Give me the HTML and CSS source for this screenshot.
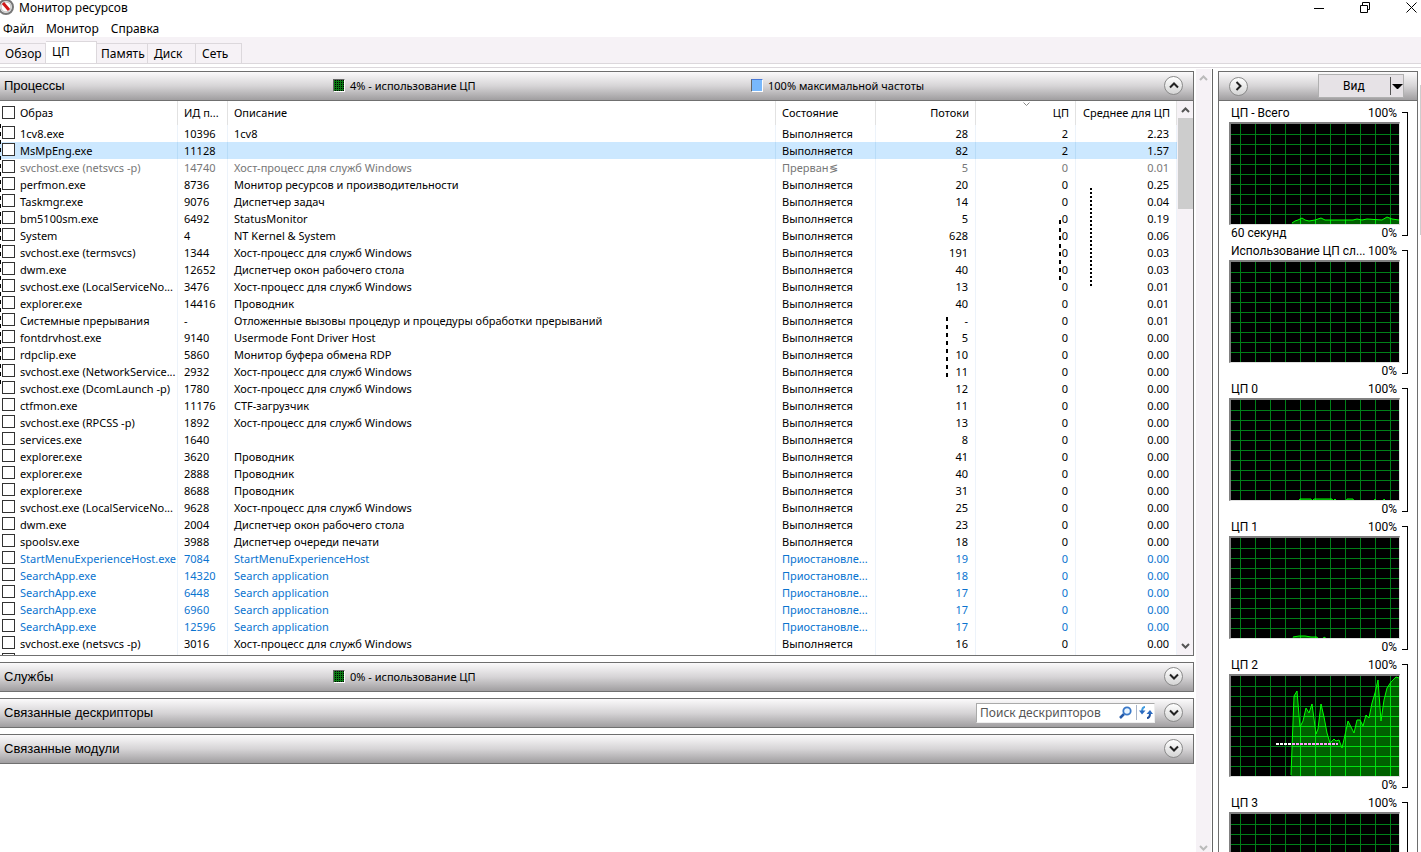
FILE: index.html
```html
<!DOCTYPE html>
<html lang="ru">
<head>
    <meta charset="UTF-8">
    <meta name="viewport" content="width=device-width, initial-scale=1.0">
    <title>Монитор ресурсов</title>
    <link rel="stylesheet" href="styles.css">
</head>
<body>
    <!-- Title Bar -->
    <header class="titlebar">
        <svg class="app-icon" width="15" height="15" viewBox="0 0 15 15">
            <circle cx="6" cy="7" r="7" fill="#f4f4f4" stroke="#777" stroke-width="2"/>
            <circle cx="6" cy="7" r="5" fill="#fff" stroke="#bbb"/>
            <path d="M3 3l6 7" stroke="#d01818" stroke-width="3"/>
        </svg>
        <h1>Монитор ресурсов</h1>
        <div class="window-buttons">
            <button aria-label="Свернуть"><svg width="11" height="11"><path d="M0 6.500h10" stroke="#000"/></svg></button>
            <button aria-label="Развернуть"><svg width="11" height="11"><path d="M.5 3.500h7v7h-7zM2.500 3.500v-3h7v7h-2" fill="none" stroke="#000"/></svg></button>
            <button aria-label="Закрыть"><svg width="11" height="11"><path d="M.5 .5l10 10M10.500 .5l-10 10" stroke="#000"/></svg></button>
        </div>
    </header>

    <nav class="menu">
        <a href="#">Файл</a>
        <a href="#">Монитор</a>
        <a href="#">Справка</a>
    </nav>

    <div class="tabs">
        <button class="tab tab-overview">Обзор</button>
        <button class="tab tab-cpu active">ЦП</button>
        <button class="tab tab-memory">Память</button>
        <button class="tab tab-disk">Диск</button>
        <button class="tab tab-net">Сеть</button>
    </div>

    <main>
        <!-- Left side: process list and collapsed sections -->
        <div class="sections">
            <section class="panel">
                <div class="panel-header">
                    <h2>Процессы</h2>
                    <span class="stat usage"><i class="swatch swatch-green"></i>4% - использование ЦП</span>
                    <span class="stat"><i class="swatch swatch-blue"></i>100% максимальной частоты</span>
                    <button class="round" aria-label="Свернуть раздел"><svg width="10" height="7"><path d="M1 5.500l4-4 4 4" /></svg></button>
                </div>
                <div class="list">
                    <table>
                        <colgroup>
                            <col class="col-image"><col class="col-pid"><col><col class="col-num"><col class="col-num"><col class="col-num"><col class="col-avg">
                        </colgroup>
                        <thead>
                            <tr>
                                <th><label><input type="checkbox">Образ</label></th>
                                <th>ИД п...</th>
                                <th>Описание</th>
                                <th>Состояние</th>
                                <th class="num">Потоки</th>
                                <th class="num sorted">ЦП<svg class="sort" width="7" height="4"><path d="M.5 .5l3 3 3-3"/></svg></th>
                                <th class="num">Среднее для ЦП</th>
                            </tr>
                        </thead>
                        <tbody id="processes"></tbody>
                    </table>
                    <div class="scrollbar">
                        <svg width="9" height="6"><path d="M1 5l3.500-3.500L8 5"/></svg>
                        <div class="thumb"></div>
                        <svg width="9" height="6"><path d="M1 1l3.500 3.500L8 1"/></svg>
                    </div>
                    <span class="trace trace-left"></span>
                    <span class="trace trace-threads"></span>
                    <span class="trace trace-cpu"></span>
                    <span class="trace trace-avg"></span>
                </div>
            </section>

            <section class="panel">
                <div class="panel-header">
                    <h2>Службы</h2>
                    <span class="stat usage"><i class="swatch swatch-green"></i>0% - использование ЦП</span>
                    <button class="round" aria-label="Развернуть раздел"><svg width="10" height="7"><path d="M1 1.500l4 4 4-4" /></svg></button>
                </div>
            </section>

            <section class="panel">
                <div class="panel-header">
                    <h2>Связанные дескрипторы</h2>
                    <form class="search">
                        <input type="text" placeholder="Поиск дескрипторов" aria-label="Поиск дескрипторов">
                        <button type="button" aria-label="Найти">
                            <svg width="13" height="13" viewBox="0 0 13 13"><path d="M1 12l4-4" stroke="#2458a8" stroke-width="2.500"/><circle cx="8" cy="5" r="3.700" fill="#e8f4ff" stroke="#3a78c8" stroke-width="1.800"/></svg>
                        </button>
                        <button type="button" class="refresh" aria-label="Обновить">
                            <svg width="14" height="13" viewBox="0 0 14 13"><path d="M6 1Q3 1 3 6" fill="none" stroke="#3f9be0" stroke-width="2"/><path d="M0 4.500h6.500L3 8.500z" fill="#2a6ac0"/><path d="M8 12q3 0 3-5" fill="none" stroke="#1f4f9c" stroke-width="2"/><path d="M7.500 8h6.500L11 4z" fill="#2a6ac0"/></svg>
                        </button>
                    </form>
                    <button class="round" aria-label="Развернуть раздел"><svg width="10" height="7"><path d="M1 1.500l4 4 4-4" /></svg></button>
                </div>
            </section>

            <section class="panel">
                <div class="panel-header">
                    <h2>Связанные модули</h2>
                    <button class="round" aria-label="Развернуть раздел"><svg width="10" height="7"><path d="M1 1.500l4 4 4-4" /></svg></button>
                </div>
            </section>
        </div>

        <div class="scrollbar page-scroll">
            <svg width="9" height="6"><path d="M1 5l3.500-3.500L8 5"/></svg>
            <svg width="9" height="6"><path d="M1 1l3.500 3.500L8 1"/></svg>
        </div>

        <!-- Right side: graphs -->
        <aside>
            <div class="charts-panel">
                <div class="panel-header">
                    <button class="round" aria-label="Скрыть графики"><svg width="7" height="10"><path d="M1.500 1l4 4-4 4" /></svg></button>
                    <button class="view">Вид<span class="arrow"></span></button>
                </div>
                <div id="charts"></div>
            </div>
            <div class="charts-scroll"></div>
        </aside>
    </main>

    <script src="script.js"></script>
</body>
</html>
```
FILE: styles.css
```css
* {
    box-sizing: border-box;
}

body {
    margin: 0;
    height: 100vh;
    overflow: hidden;
    display: flex;
    flex-direction: column;
    background-color: #fff;
    color: #000;
    font-family: "Noto Sans", "Open Sans", sans-serif;
    font-size: 11px;
    line-height: 17px;
}

button, input {
    font: inherit;
    color: inherit;
    padding: 0;
    border: 0;
    background: none;
}

/* Title Bar */
.titlebar {
    display: flex;
    align-items: center;
    height: 14px;
}

.titlebar h1 {
    flex: 1;
    margin: 0 0 0 4px;
    font-size: 12px;
    font-weight: normal;
}

.window-buttons {
    display: flex;
    gap: 35px;
    padding-right: 4px;
}

.window-buttons button {
    display: flex;
}

/* Menu */
.menu {
    display: flex;
    gap: 12px;
    height: 23px;
    padding: 6px 3px 0;
    font-size: 12px;
}

.menu a {
    color: #000;
    text-decoration: none;
}

/* Tabs */
.tabs {
    display: flex;
    align-items: flex-end;
    height: 27px;
    background-color: #f6f2f6;
    border-bottom: 1px solid #dcd8dc;
    font-size: 12px;
}

.tab {
    height: 20px;
    padding-left: 6px;
    text-align: left;
    border: 1px solid #dcd8dc;
    border-width: 1px 1px 0 0;
}

.tab.active {
    height: 22px;
    padding-bottom: 2px;
    background-color: #fff;
}

.tab-overview {
    width: 46px;
    padding-left: 5px;
}

.tab-cpu {
    width: 51px;
}

.tab-memory {
    width: 51px;
    padding-left: 4px;
}

.tab-disk {
    width: 48px;
}

.tab-net {
    width: 46px;
}

/* Main Content */
main {
    flex: 1;
    min-height: 0;
    display: flex;
    overflow: hidden;
    margin-top: 3px;
    border-top: 1px solid #dcd8dc;
}

.sections {
    flex: 1;
    min-width: 0;
    display: flex;
    flex-direction: column;
    gap: 6px;
    padding-top: 3px;
}

.panel {
    border: 1px solid #6e6e6e;
    border-width: 1px 1px 0 0;
}

.panel-header {
    display: flex;
    align-items: center;
    height: 29px;
    padding: 0 10px 1px 4px;
    background: linear-gradient(#fbfafb, #d6d4d6 50%, #a09ea0);
    border-bottom: 1px solid #707070;
}

.panel-header h2 {
    flex: none;
    width: 329px;
    margin: 0;
    font-family: "Liberation Sans", Arial, sans-serif;
    font-size: 13px;
    font-weight: normal;
}

.stat {
    display: flex;
    align-items: center;
    gap: 5px;
}

.usage {
    width: 418px;
}

.swatch {
    flex: none;
    width: 12px;
    height: 13px;
    border: 1px solid #666;
    border-right-color: #fff;
    border-bottom-color: #fff;
}

.swatch-green {
    background: conic-gradient(#000 25%, #0a7a14 0) 0 0 / 2px 2px;
}

.swatch-blue {
    background-color: #78b8fc;
    border-top-color: #4878d8;
}

.round {
    display: flex;
    align-items: center;
    justify-content: center;
    width: 19px;
    height: 19px;
    margin-left: auto;
    border: 1px solid #8a8a8a;
    border-radius: 50%;
    background: linear-gradient(#fff, #d4d4d4);
}

.round path {
    fill: none;
    stroke: #222;
    stroke-width: 2;
}

/* Search Box */
.search {
    display: flex;
    align-items: center;
    width: 179px;
    height: 20px;
    margin-left: auto;
    padding-left: 3px;
    background-color: #fff;
    border: 1px solid #aaa;
    border-right-color: #eee;
    border-bottom-color: #eee;
}

.search input {
    flex: 1;
    min-width: 0;
    outline: 0;
    font-size: 12px;
}

.search input::placeholder {
    color: #555;
}

.search button {
    display: flex;
    margin-right: 4px;
}

.search .refresh {
    margin: 0;
    padding: 1px 1px 1px 2px;
    border-left: 1px solid #a8b4c8;
}

.search + .round {
    margin-left: 9px;
}

/* Process Table */
.list {
    position: relative;
    display: flex;
    height: 555px;
    overflow: hidden;
    border-bottom: 1px solid #707070;
}

table {
    flex: 1;
    width: 0;
    align-self: flex-start;
    table-layout: fixed;
    border-collapse: separate;
    border-spacing: 0;
}

.col-image {
    width: 178px;
}

.col-pid {
    width: 50px;
}

.col-num {
    width: 100px;
}

.col-avg {
    width: 101px;
}

th, td {
    height: 17px;
    padding: 0 6px;
    white-space: nowrap;
    text-align: left;
    font-weight: normal;
    border-right: 1px solid #edf3fa;
}

th {
    height: 24px;
    padding-bottom: 1px;
    border-right-color: #e2e2e2;
}

th:first-child, td:first-child {
    padding-left: 2px;
    padding-right: 0;
}

td.num {
    padding-right: 7px;
}

.num {
    text-align: right;
}

.sorted {
    position: relative;
}

.sort {
    position: absolute;
    top: 1px;
    left: 47px;
    fill: none;
    stroke: #888;
}

td label, th label {
    display: flex;
    align-items: center;
    gap: 5px;
}

td label {
    height: 17px;
}

input[type="checkbox"] {
    appearance: none;
    flex: none;
    width: 13px;
    height: 13px;
    margin: 0;
    background-color: #fff;
    border: 1px solid #333;
}

td input[type="checkbox"] {
    margin-bottom: 2px;
}

tr.selected {
    background-color: #cce8ff;
}

tr.selected td {
    border-right-color: #b8dcf8;
}

tr.terminated {
    color: #777;
}

tr.suspended {
    color: #0a74d0;
}

/* Scrollbars */
.scrollbar {
    flex: none;
    display: flex;
    flex-direction: column;
    align-items: center;
    width: 16px;
    padding: 6px 0;
    background-color: #f6f2f6;
}

.scrollbar path {
    fill: none;
    stroke: #555;
    stroke-width: 2;
}

.scrollbar svg:last-child {
    margin-top: auto;
}

.thumb {
    width: 15px;
    height: 91px;
    margin-top: 5px;
    background-color: #cdcdcd;
}

.page-scroll {
    width: 15px;
    margin: 1px 1px 0 2px;
    padding: 6px 0 1px;
}

.page-scroll path {
    stroke: #bbb;
}

/* Leftover drag traces */
.trace {
    position: absolute;
    width: 2px;
    background: repeating-linear-gradient(#000 0 4px, transparent 4px 8px);
}

.trace-left {
    left: 0;
    top: 23px;
    width: 1px;
    height: 260px;
}

.trace-threads {
    left: 946px;
    top: 216px;
    height: 60px;
}

.trace-cpu {
    left: 1059px;
    top: 119px;
    height: 63px;
}

.trace-avg {
    left: 1090px;
    top: 87px;
    height: 99px;
    background: repeating-linear-gradient(#000 0 2px, transparent 2px 4px);
}

/* Graphs */
aside {
    flex: none;
    display: flex;
    width: 209px;
    margin-top: 1px;
    padding: 2px 0 0 5px;
    border-left: 1px solid #666;
}

.charts-panel {
    width: 200px;
    border: 1px solid #6e6e6e;
    border-bottom: 0;
}

.charts-panel .panel-header {
    justify-content: space-between;
    padding: 0 13px 0 10px;
}

.charts-panel .round {
    margin: 0;
}

.charts-scroll {
    width: 1px;
    height: 150px;
    margin: 14px 0 0 2px;
    background-color: #cdcdcd;
}

.view {
    display: flex;
    align-items: center;
    width: 86px;
    height: 24px;
    padding-left: 24px;
    background-color: #e6e2e6;
    border: 1px solid #b0b0b0;
    font-family: Roboto, sans-serif;
    font-size: 12px;
}

.arrow {
    width: 13px;
    height: 18px;
    margin-left: auto;
    border-left: 1px solid #555;
}

.arrow::after {
    content: "";
    display: block;
    margin: 7px 0 0 1px;
    border: 5px solid transparent;
    border-top-color: #000;
    border-bottom: 0;
}

#charts {
    padding: 4px 9px 0 10px;
}

.chart {
    display: grid;
    grid-template-columns: 171px 6px;
    column-gap: 2px;
    font-family: Roboto, sans-serif;
    font-size: 12px;
}

.chart-caption {
    display: flex;
    justify-content: space-between;
    height: 17px;
    padding: 0 3px 0 2px;
    white-space: nowrap;
}

.chart svg {
    display: block;
    width: 171px;
    height: 103px;
    border: 1px solid #e0e0e0;
    border-top: 2px solid #808080;
    border-left: 2px solid #808080;
    background-color: #000;
}

.chart-foot {
    height: 18px;
}

.bracket {
    grid-column: 2;
    grid-row: 1 / 4;
    margin: 7px 0;
    border: 1px solid #000;
    border-left: 0;
}
```
FILE: script.js
```javascript
// image, pid, description, threads, cpu, average, state
const processes = [
    ["1cv8.exe", "10396", "1cv8", "28", "2", "2.23"],
    ["MsMpEng.exe", "11128", "", "82", "2", "1.57", "selected"],
    ["svchost.exe (netsvcs -p)", "14740", "Хост-процесс для служб Windows", "5", "0", "0.01", "terminated"],
    ["perfmon.exe", "8736", "Монитор ресурсов и производительности", "20", "0", "0.25"],
    ["Taskmgr.exe", "9076", "Диспетчер задач", "14", "0", "0.04"],
    ["bm5100sm.exe", "6492", "StatusMonitor", "5", "0", "0.19"],
    ["System", "4", "NT Kernel & System", "628", "0", "0.06"],
    ["svchost.exe (termsvcs)", "1344", "Хост-процесс для служб Windows", "191", "0", "0.03"],
    ["dwm.exe", "12652", "Диспетчер окон рабочего стола", "40", "0", "0.03"],
    ["svchost.exe (LocalServiceNo...", "3476", "Хост-процесс для служб Windows", "13", "0", "0.01"],
    ["explorer.exe", "14416", "Проводник", "40", "0", "0.01"],
    ["Системные прерывания", "-", "Отложенные вызовы процедур и процедуры обработки прерываний", "-", "0", "0.01"],
    ["fontdrvhost.exe", "9140", "Usermode Font Driver Host", "5", "0", "0.00"],
    ["rdpclip.exe", "5860", "Монитор буфера обмена RDP", "10", "0", "0.00"],
    ["svchost.exe (NetworkService...", "2932", "Хост-процесс для служб Windows", "11", "0", "0.00"],
    ["svchost.exe (DcomLaunch -p)", "1780", "Хост-процесс для служб Windows", "12", "0", "0.00"],
    ["ctfmon.exe", "11176", "CTF-загрузчик", "11", "0", "0.00"],
    ["svchost.exe (RPCSS -p)", "1892", "Хост-процесс для служб Windows", "13", "0", "0.00"],
    ["services.exe", "1640", "", "8", "0", "0.00"],
    ["explorer.exe", "3620", "Проводник", "41", "0", "0.00"],
    ["explorer.exe", "2888", "Проводник", "40", "0", "0.00"],
    ["explorer.exe", "8688", "Проводник", "31", "0", "0.00"],
    ["svchost.exe (LocalServiceNo...", "9628", "Хост-процесс для служб Windows", "25", "0", "0.00"],
    ["dwm.exe", "2004", "Диспетчер окон рабочего стола", "23", "0", "0.00"],
    ["spoolsv.exe", "3988", "Диспетчер очереди печати", "18", "0", "0.00"],
    ["StartMenuExperienceHost.exe", "7084", "StartMenuExperienceHost", "19", "0", "0.00", "suspended"],
    ["SearchApp.exe", "14320", "Search application", "18", "0", "0.00", "suspended"],
    ["SearchApp.exe", "6448", "Search application", "17", "0", "0.00", "suspended"],
    ["SearchApp.exe", "6960", "Search application", "17", "0", "0.00", "suspended"],
    ["SearchApp.exe", "12596", "Search application", "17", "0", "0.00", "suspended"],
    ["svchost.exe (netsvcs -p)", "3016", "Хост-процесс для служб Windows", "16", "0", "0.00"],
    ["", "", "", "", "", ""]
];

const stateNames = {
    terminated: "Прерван≶",
    suspended: "Приостановле..."
};

document.getElementById("processes").innerHTML = processes.map(([image, pid, text, threads, cpu, avg, state]) => `
    <tr class="${state || ""}">
        <td><label><input type="checkbox">${image}</label></td>
        <td>${pid}</td>
        <td>${text.replace("&", "&amp;")}</td>
        <td>${pid ? stateNames[state] || "Выполняется" : ""}</td>
        <td class="num">${threads}</td>
        <td class="num">${cpu}</td>
        <td class="num">${avg}</td>
    </tr>`).join("");

// Points are in graph pixels, 168 x 100
const charts = [
    { name: "ЦП - Всего", foot: "60 секунд", points: "61,99 64,97 67,96 71,94 74,96 78,97 84,96 90,94 94,96 122,96 126,95 131,96 136,95 151,96 156,93 161,95 168,96" },
    { name: "Использование ЦП сл...", points: "" },
    { name: "ЦП 0", points: "67,101 69,99 80,99 81,101 83,99 101,99 102,101 104,99 106,101 115,101 116,99 122,99 123,101 143,101 144,99 146,101 152,101 153,99 155,101" },
    { name: "ЦП 1", points: "62,99 68,98 74,98 80,99 86,99 87,101 92,101 93,99 96,101" },
    { name: "ЦП 2", trace: true, points: "60,99 63,20 66,15 69,51 72,45 75,32 78,37 81,28 85,58 87,53 90,28 93,41 96,57 99,67 103,63 105,65 108,64 111,72 114,59 117,45 120,51 123,57 126,44 129,44 132,50 135,39 138,42 141,27 144,17 147,4 150,45 153,24 156,12 160,6 165,1 168,2" },
    { name: "ЦП 3", points: "" }
];

let gridLines = "";
for (let x = 9; x < 168; x += 15) {
    gridLines += `M${x + 0.5} 0v100`;
}
for (let y = 10; y < 100; y += 10) {
    gridLines += `M0 ${y + 0.5}h168`;
}

document.getElementById("charts").innerHTML = charts.map((chart, i) => `
    <div class="chart">
        <div class="chart-caption"><span>${chart.name}</span><span>100%</span></div>
        <svg viewBox="0 0 168 100">
            <path d="${gridLines}" stroke="#008018"/>
            ${chart.points ? `<clipPath id="area${i}"><polygon points="${chart.points} 168,101 60,101"/></clipPath>
            <g clip-path="url(#area${i})">
                <rect width="168" height="100" fill="#006000"/>
                <path d="${gridLines}" stroke="#00e010"/>
            </g>
            <polyline points="${chart.points}" fill="none" stroke="#00ff00"/>` : ""}
            ${chart.trace ? `<path d="M45 68h16" stroke="#fff" stroke-width="2" stroke-dasharray="3 1"/>
            <path d="M61 68h46" stroke="#ff9cff" stroke-width="2" stroke-dasharray="3 1"/>` : ""}
        </svg>
        <div class="chart-caption chart-foot"><span>${chart.foot || ""}</span><span>0%</span></div>
        <div class="bracket"></div>
    </div>`).join("");
```
